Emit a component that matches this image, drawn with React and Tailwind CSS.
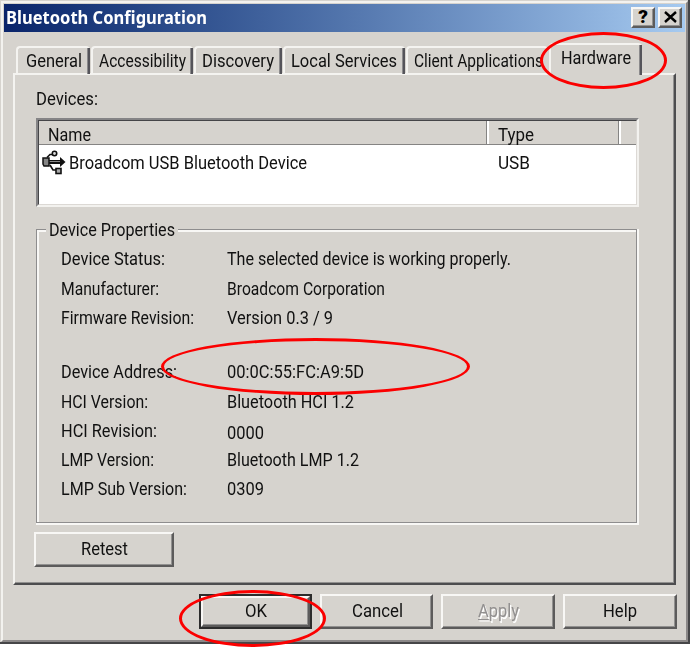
import { useLayoutEffect, useRef } from 'react';

const tabs = [
  { name: 'General', text: 56, className: 'w-[74px] pl-[8px]' },
  { name: 'Accessibility', text: 87, className: 'w-[102px] pl-[6px]' },
  { name: 'Discovery', text: 72, className: 'w-[88px] pl-[6px]' },
  { name: 'Local Services', text: 106, className: 'w-[122px] pl-[6px]' },
  { name: 'Client Applications', text: 129, className: 'w-[142px] pl-[6px]', covered: true },
];

const properties = [
  { label: 'Device Status:', w: 104, value: 'The selected device is working properly.', vw: 284, className: 'h-[30px]' },
  { label: 'Manufacturer:', w: 98, value: 'Broadcom Corporation', vw: 158, className: 'h-[29px]' },
  { label: 'Firmware Revision:', w: 133, value: 'Version 0.3 / 9', vw: 106, className: 'h-[54px]' },
  { label: 'Device Address:', w: 116, value: '00:0C:55:FC:A9:5D', vw: 137, className: 'h-[30px]' },
  { label: 'HCI Version:', w: 87, value: 'Bluetooth HCI 1.2', vw: 127, className: 'h-[29px]' },
  { label: 'HCI Revision:', w: 96, value: '0000', vw: 37, className: 'h-[29px]', valueClass: 'pt-0.5' },
  { label: 'LMP Version:', w: 93, value: 'Bluetooth LMP 1.2', vw: 132, className: 'h-[29px]' },
  { label: 'LMP Sub Version:', w: 126, value: '0309', vw: 37, className: 'h-[29px]' },
];

// Squeezes a line of text so it takes exactly `w` pixels
function Fit({ w, children, className = '' }) {
  const ref = useRef(null);

  useLayoutEffect(() => {
    const el = ref.current;
    const fit = () => {
      el.style.transform = 'none';
      el.style.transform = `scaleX(${w / el.getBoundingClientRect().width})`;
    };
    fit();
    document.fonts.ready.then(fit);
  }, [w]);

  return (
    <span className="block shrink-0" style={{ width: w }}>
      <span ref={ref} className={`inline-block origin-left whitespace-nowrap ${className}`}>{children}</span>
    </span>
  );
}

function Tab({ children, className, covered }) {
  return (
    <div className={`relative shrink-0 rounded-t-[4px] border-t-2 border-l-2 border-[#f4f3f0] ${className}`}>
      {children}
      {!covered && <div className="absolute top-0 right-0 bottom-0 w-[3px] border-l border-[#8b8a8c] bg-[#55545a]" />}
    </div>
  );
}

function Button({ children, className = '' }) {
  return (
    <div className={`flex items-center justify-center border-2 border-t-[#f8f7f5] border-l-[#f8f7f5] border-r-[#5c5b5b] border-b-[#5c5b5b] shadow-[inset_-1px_-1px_0_#929190] ${className}`}>
      {children}
    </div>
  );
}

function UsbIcon() {
  return (
    <svg width="24" height="26" viewBox="0 0 24 26" fill="none" stroke="#111" strokeWidth="1.6">
      <path d="M7 12h12" strokeWidth="4" />
      <path d="M7 11.5h11" stroke="#888" strokeWidth="1" />
      <path d="M18 7l5.5 5-5.5 5z" fill="#111" stroke="none" />
      <path d="M1 8h6v8H2l-1-2z" fill="#858585" strokeWidth="1.5" />
      <path d="M5 7.5l3-3h3M8 15l3 5h4" />
      <circle cx="12.5" cy="3.5" r="2.2" fill="#ddd" />
      <rect x="14" y="18.5" width="5" height="5" fill="#aaa" />
    </svg>
  );
}

function Ring({ className }) {
  return <div className={`pointer-events-none absolute z-20 rounded-[50%] border-[3px] border-[#fb0000] ${className}`} />;
}

export default function App() {
  return (
    <div className="relative h-[648px] w-[690px] overflow-hidden bg-white font-['Roboto','Liberation_Sans',sans-serif] text-[18px] leading-[22px] text-[#111]">
      <div className="h-[644px] border-r-2 border-b-2 border-[#464648] bg-[#d6d3ce] pt-px pl-px">
        <div className="h-full border-2 border-t-[#f3f2ef] border-r-[#8b8888] border-b-[#8b8888] border-l-[#f3f2ef] pt-px pl-px">
          {/* Title bar */}
          <div className="flex h-[28px] w-[681px] items-center bg-linear-to-r from-[#0a246a] to-[#a6caf0] pr-[3px] pl-[2px] text-[17px] font-bold text-white">
            <Fit w={201} className="font-['Noto_Sans',sans-serif]">Bluetooth Configuration</Fit>
            <Button className="mb-[2px] ml-auto h-[21px] w-[24px] bg-[#d6d3ce] text-[19px] font-black text-black">?</Button>
            <Button className="mb-[2px] ml-[3px] h-[21px] w-[24px] bg-[#d6d3ce]">
              <svg width="13" height="12" viewBox="0 0 13 12" stroke="#000" strokeWidth="2.4"><path d="M1 1l11 10M12 1L1 11" /></svg>
            </Button>
          </div>

          {/* Tabs */}
          <div className="mt-[10px] flex h-[31px] items-end pl-[12px]">
            {tabs.map(({ name, text, className, covered }) => (
              <Tab key={name} covered={covered} className={`mr-px -mb-px h-[28px] pt-[2px] ${className}`}>
                <Fit w={text}>{name}</Fit>
              </Tab>
            ))}
            <Tab className="z-10 -mb-[2px] h-[32px] w-[93px] bg-[#d6d3ce] pt-[2px] pl-[10px]">
              <Fit w={70}>Hardware</Fit>
            </Tab>
          </div>

          {/* Tab page */}
          <div className="ml-[9px] h-[512px] w-[663px] border-2 border-t-[#f4f3f0] border-r-[#4d4d4f] border-b-[#4d4d4f] border-l-[#f4f3f0] pt-[13px] pl-[21px] shadow-[inset_-1px_-1px_0_#929190]">
            <Fit w={62}>Devices:</Fit>

            <div className="mt-[8px] h-[89px] w-[603px] border-2 border-t-[#858486] border-r-[#f3f2ef] border-b-[#f3f2ef] border-l-[#858486]">
              <div className="h-full border border-t-[#454548] border-r-[#dcd9d5] border-b-[#dcd9d5] border-l-[#454548] bg-white">
                <div className="flex h-[24px] border-b border-[#858483] bg-[#d6d3ce]">
                  <div className="w-[448px] border-r border-[#858483] pt-[3px] pl-[9px]"><Fit w={43}>Name</Fit></div>
                  <div className="w-[132px] border-r border-l-2 border-r-[#858483] border-l-white pt-[3px] pl-[9px]"><Fit w={36}>Type</Fit></div>
                  <div className="flex-1 border-l-2 border-white" />
                </div>
                <div className="flex items-start pt-[5px] pl-[3px]">
                  <UsbIcon />
                  <div className="mt-[2px] ml-[3px] w-[429px]"><Fit w={238}>Broadcom USB Bluetooth Device</Fit></div>
                  <div className="mt-[2px]"><Fit w={32}>USB</Fit></div>
                </div>
              </div>
            </div>

            {/* Device Properties group */}
            <div className="relative mt-[22px] h-[294px] w-[601px] border border-[#8e8d8e] pt-[18px] pl-[24px] shadow-[1px_1px_0_1px_#f8f7f5,inset_1px_1px_0_1px_#f8f7f5]">
              <div className="absolute -top-[11px] left-[9px] bg-[#d6d3ce] px-[3px]"><Fit w={126}>Device Properties</Fit></div>
              {properties.map(({ label, w, value, vw, className, valueClass = '' }) => (
                <div key={label} className={`flex ${className}`}>
                  <div className="w-[166px]"><Fit w={w}>{label}</Fit></div>
                  <div className={valueClass}><Fit w={vw}>{value}</Fit></div>
                </div>
              ))}
            </div>

            <Button className="mt-[9px] -ml-[2px] h-[35px] w-[140px] pb-px"><Fit w={47}>Retest</Fit></Button>
          </div>

          {/* Dialog buttons */}
          <div className="mt-[9px] flex gap-[8px] pl-[195px]">
            <div className="border-2 border-[#2c2c2c]">
              <Button className="h-[31px] w-[109px] pb-[2px]"><Fit w={22}>OK</Fit></Button>
            </div>
            <Button className="h-[35px] w-[113px] pb-px pl-[2px]"><Fit w={51}>Cancel</Fit></Button>
            <Button className="h-[35px] w-[114px] pb-px text-[#929090] [text-shadow:1.5px_1.5px_0_#fff]"><Fit w={41}><u className="underline-offset-2">A</u>pply</Fit></Button>
            <Button className="h-[35px] w-[114px] pb-px"><Fit w={34}>Help</Fit></Button>
          </div>
        </div>
      </div>

      <Ring className="top-[32px] left-[540px] h-[57px] w-[127px]" />
      <Ring className="top-[338px] left-[161px] h-[57px] w-[309px]" />
      <Ring className="top-[590px] left-[179px] h-[57px] w-[147px]" />
    </div>
  );
}
